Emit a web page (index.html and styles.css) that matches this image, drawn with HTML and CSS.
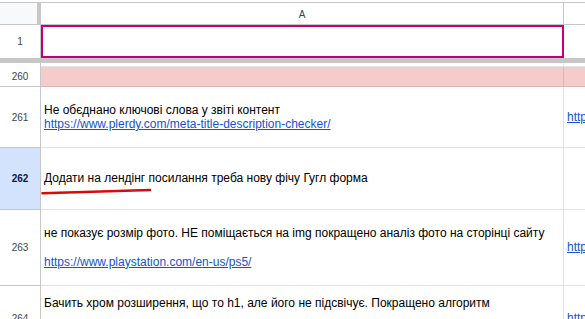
FILE: index.html
```html
<!DOCTYPE html>
<html lang="uk">
<head>
<meta charset="utf-8">
<title>Sheet</title>
<link rel="stylesheet" href="styles.css">
</head>
<body>
<div class="sheet">
  <div class="colhead">
    <div class="corner"></div>
    <div class="ch ch-a">A</div>
    <div class="ch ch-b"></div>
  </div>

  <div class="row r1">
    <div class="rh">1</div>
    <div class="cell a selected"></div>
    <div class="cell b"></div>
  </div>

  <div class="freeze"></div>

  <div class="row gap">
    <div class="rh"></div>
    <div class="cell a"></div>
    <div class="cell b"></div>
  </div>

  <div class="row r260">
    <div class="rh">260</div>
    <div class="cell a pink"></div>
    <div class="cell b pink"></div>
  </div>

  <div class="row r261">
    <div class="rh">261</div>
    <div class="cell a">
      <div class="txt">Не обєднано ключові слова у звіті контент<br><a href="#">https://www.plerdy.com/meta-title-description-checker/</a></div>
    </div>
    <div class="cell b"><a href="#">https://www.plerdy.com/</a></div>
  </div>

  <div class="row r262">
    <div class="rh active">262</div>
    <div class="cell a">
      <div class="txt">Додати на лендінг посилання треба нову фічу Гугл форма</div>
      <svg class="mark" width="120" height="8" viewBox="0 0 120 8"><path d="M1.5 5.2 Q55 3.4 109 2" fill="none" stroke="#d90a0a" stroke-width="2.6" stroke-linecap="round"/></svg>
    </div>
    <div class="cell b"></div>
  </div>

  <div class="row r263">
    <div class="rh">263</div>
    <div class="cell a">
      <div class="txt">не показує розмір фото. НЕ поміщається на img покращено аналіз фото на сторінці сайту<br><br><a href="#">https://www.playstation.com/en-us/ps5/</a></div>
    </div>
    <div class="cell b"><a href="#">https://www.plerdy.com/</a></div>
  </div>

  <div class="row r264">
    <div class="rh">264</div>
    <div class="cell a">
      <div class="txt">Бачить хром розширення, що то h1, але його не підсвічує. Покращено алгоритм<br><br><a href="#">https://www.plerdy.com/</a></div>
    </div>
    <div class="cell b"><a href="#">https://www.plerdy.com/</a></div>
  </div>
</div>
</body>
</html>
```

FILE: styles.css
```css
html, body {
  margin: 0;
  padding: 0;
  background: #ffffff;
  overflow: hidden;
}

.sheet {
  width: 585px;
  height: 319px;
  overflow: hidden;
  padding-top: 2px;
  font-family: "Liberation Sans", Arial, sans-serif;
}

.colhead {
  display: flex;
  height: 21px;
  border-top: 1px solid #c7c7c7;
  border-bottom: 1px solid #c7c7c7;
  box-sizing: content-box;
}

.corner {
  width: 37px;
  flex: none;
  background: #f8f9fa;
  border-right: 4px solid #c7c7c7;
}

.ch {
  display: flex;
  align-items: center;
  justify-content: center;
  font-size: 10px;
  color: #444444;
  background: #ffffff;
}

.ch-a {
  width: 523px;
  flex: none;
  box-sizing: border-box;
  border-right: 1px solid #c7c7c7;
  padding-top: 1px;
}

.ch-b {
  flex: 1;
}

.row {
  display: flex;
}

.rh {
  width: 41px;
  flex: none;
  box-sizing: border-box;
  border-right: 1px solid #c7c7c7;
  border-bottom: 1px solid #c7c7c7;
  display: flex;
  align-items: center;
  justify-content: center;
  font-size: 10px;
  color: #444444;
  background: #ffffff;
}

.rh.active {
  background: #d3e3fd;
  color: #0a1a4a;
  font-weight: bold;
}

.cell {
  box-sizing: border-box;
  border-bottom: 1px solid #e2e2e2;
  font-size: 12px;
  line-height: 14.5px;
  color: #000000;
  display: flex;
  align-items: center;
  padding: 0 3px;
  white-space: nowrap;
  overflow: hidden;
}

.cell.a {
  width: 523px;
  flex: none;
  border-right: 1px solid #e2e2e2;
  position: relative;
}

.cell.b {
  flex: 1;
}

a {
  color: #1155cc;
  text-decoration: underline;
}

.r1 {
  height: 33px;
}

.r1 .rh {
  border-bottom: none;
}

.r1 .cell.b {
  border-bottom: none;
}

.r1 .cell.a.selected {
  border: none;
  box-shadow: inset 0 0 0 2px #c2007a;
}

.freeze {
  height: 5px;
  background: #c7c7c7;
}

.gap {
  height: 4px;
}

.gap .rh {
  border-bottom: none;
}

.gap .cell.a {
  border-bottom: 1px solid #e2e2e2;
}

.r260 {
  height: 20px;
}

.cell.pink {
  background: #f4cccc;
  border-bottom-color: #dfb6b6;
}

.cell.a.pink {
  border-right-color: #dfb6b6;
}

.r261 {
  height: 61px;
}

.r262 {
  height: 62px;
}

.r263 {
  height: 76px;
}

.r264 {
  height: 65px;
}

.mark {
  position: absolute;
  left: 0;
  top: 40px;
}
```
